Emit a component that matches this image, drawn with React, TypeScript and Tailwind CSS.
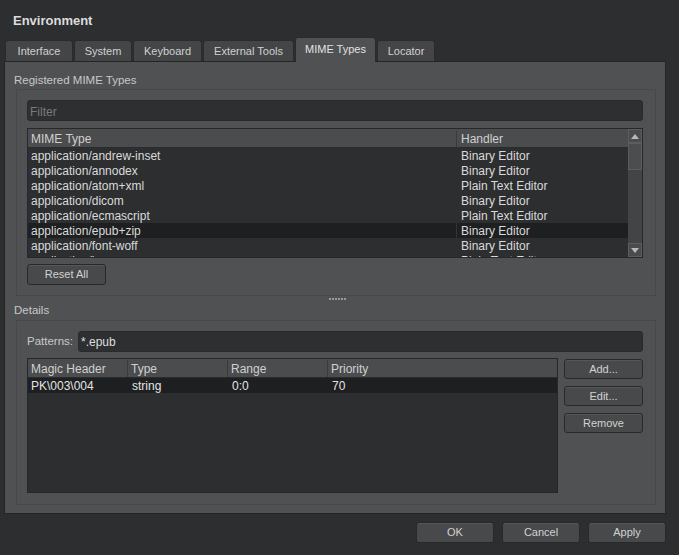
import React from 'react';

const tabs = [
  { label: 'Interface', w: 'w-[68px]' },
  { label: 'System', w: 'w-[58px]' },
  { label: 'Keyboard', w: 'w-[69px]' },
  { label: 'External Tools', w: 'w-[91px]' },
  { label: 'MIME Types', w: 'w-[81px]', active: true },
  { label: 'Locator', w: 'w-[58px]' },
];

const mimeRows = [
  ['application/andrew-inset', 'Binary Editor'],
  ['application/annodex', 'Binary Editor'],
  ['application/atom+xml', 'Plain Text Editor'],
  ['application/dicom', 'Binary Editor'],
  ['application/ecmascript', 'Plain Text Editor'],
  ['application/epub+zip', 'Binary Editor'],
  ['application/font-woff', 'Binary Editor'],
  ['application/json', 'Plain Text Editor'],
];

function Btn({ label, className = '' }: { label: string; className?: string }) {
  return (
    <button
      className={`h-[20px] rounded-[3px] border border-[#28292b] bg-[#48494b] text-[11px] leading-none text-[#d2d2d2] shadow-[inset_0_1px_0_#56575a] ${className}`}
    >
      {label}
    </button>
  );
}

function Arrow({ up }: { up?: boolean }) {
  return (
    <div className="h-[14px] border border-[#5c5d60] bg-[#4a4b4d] flex items-center justify-center">
      <svg width="8" height="5" viewBox="0 0 8 5">
        <polygon points={up ? '0,5 8,5 4,0' : '0,0 8,0 4,5'} fill="#b8b8b8" />
      </svg>
    </div>
  );
}

export default function App() {
  return (
    <div
      className="w-[679px] h-[555px] bg-[#2d2e30] overflow-hidden text-[#d4d4d4]"
      style={{ fontFamily: '"Liberation Sans", Arial, sans-serif' }}
    >
      {/* title */}
      <div className="h-[37px] pl-[13px] pt-[13px] text-[13px] font-bold leading-[16px] text-[#dcdcdc]">
        Environment
      </div>

      {/* tabs */}
      <div className="h-[24px] pl-[5px] flex items-end gap-[1px] relative z-10">
        {tabs.map((t) =>
          t.active ? (
            <div
              key={t.label}
              className={`${t.w} h-[25px] -mb-px rounded-t-[3px] border border-b-0 border-[#2a2b2d] bg-[#505153] flex items-center justify-center pb-[2px] text-[11px] text-[#e2e2e2]`}
            >
              {t.label}
            </div>
          ) : (
            <div
              key={t.label}
              className={`${t.w} h-[21px] rounded-t-[3px] border border-b-0 border-[#2a2b2d] bg-[#444547] flex items-center justify-center text-[11px] text-[#d0d0d0]`}
            >
              {t.label}
            </div>
          )
        )}
      </div>

      {/* panel */}
      <div className="ml-[4px] w-[662px] h-[453px] border border-[#242527] bg-[#505153] pl-[11px]">
        <div className="pt-[10px] -ml-[2px] h-[25px] text-[11.5px] leading-[16px] text-[#c8c8c8]">
          Registered MIME Types
        </div>
        <div className="mt-[2px] w-[640px] h-[207px] border border-[#47484a] pl-[10px] pr-[12px] pt-[10px]">
          <div className="h-[21px] rounded-[3px] border border-[#292a2c] bg-[#2e2f31] pl-[2px] pt-[2px] flex items-center text-[12px] text-[#7a7a7a]">
            Filter
          </div>
          <div className="mt-[7px] h-[130px] border border-[#27282a] bg-[#2d2e30] flex overflow-hidden">
            <div className="flex-1 flex flex-col overflow-hidden">
              <div className="h-[19px] shrink-0 bg-[#4b4c4e] border-b border-[#2a2b2d] flex pt-[2px] text-[12px] text-[#d0d0d0]">
                <div className="w-[429px] border-r border-[#3a3b3d] pl-[3px] flex items-center">MIME Type</div>
                <div className="flex-1 pl-[4px] flex items-center">Handler</div>
              </div>
              {mimeRows.map(([type, handler], i) => (
                <div
                  key={type}
                  className={`h-[15px] shrink-0 flex text-[12px] leading-[15px] text-[#dadada] ${i === 5 ? 'bg-[#1e1f20]' : ''}`}
                >
                  <div className={`w-[429px] pl-[3px] pt-px ${i === 5 ? 'border-r border-[#333436]' : ''}`}>{type}</div>
                  <div className="flex-1 pl-[4px] pt-px">{handler}</div>
                </div>
              ))}
            </div>
            <div className="w-[14px] flex flex-col">
              <Arrow up />
              <div className="flex-1 bg-[#434446]">
                <div className="h-[27px] border border-[#5c5d60] bg-[#4c4d4f]" />
              </div>
              <Arrow />
            </div>
          </div>
          <Btn label="Reset All" className="mt-[6px] w-[79px] h-[21px]" />
        </div>

        {/* splitter */}
        <div className="w-[640px] h-[5px] flex items-center justify-center gap-[1px] pl-[2px]">
          {[0, 1, 2, 3, 4, 5].map((d) => (
            <div key={d} className="w-[2px] h-[2px] bg-[#9a9a9a]" />
          ))}
        </div>

        <div className="-ml-[2px] h-[16px] pt-px text-[11.5px] leading-[16px] text-[#c8c8c8]">Details</div>
        <div className="mt-[3px] w-[640px] h-[185px] border border-[#47484a] pl-[10px] pr-[12px] pt-[10px]">
          <div className="h-[21px] flex items-center">
            <div className="w-[51px] pt-px text-[11.5px] text-[#c8c8c8]">Patterns:</div>
            <div className="flex-1 h-[21px] rounded-[3px] border border-[#292a2c] bg-[#2e2f31] pl-[2px] pt-px flex items-center text-[12px] text-[#dedede]">
              *.epub
            </div>
          </div>
          <div className="mt-[6px] flex">
            <div className="w-[531px] h-[135px] border border-[#27282a] bg-[#2d2e30] flex flex-col">
              <div className="h-[19px] shrink-0 bg-[#4b4c4e] border-b border-[#2a2b2d] flex pt-px text-[12px] text-[#d0d0d0]">
                <div className="w-[100px] border-r border-[#3a3b3d] pl-[3px] flex items-center">Magic Header</div>
                <div className="w-[100px] border-r border-[#3a3b3d] pl-[3px] flex items-center">Type</div>
                <div className="w-[100px] border-r border-[#3a3b3d] pl-[3px] flex items-center">Range</div>
                <div className="flex-1 pl-[3px] flex items-center">Priority</div>
              </div>
              <div className="h-[15px] bg-[#1e1f20] flex text-[12px] leading-[15px] text-[#e4e4e4]">
                <div className="w-[100px] pl-[3px] pt-px">PK\003\004</div>
                <div className="w-[100px] pl-[4px] pt-px">string</div>
                <div className="w-[100px] pl-[4px] pt-px">0:0</div>
                <div className="flex-1 pl-[4px] pt-px">70</div>
              </div>
            </div>
            <div className="ml-[6px] mt-[1px] w-[79px] flex flex-col gap-[7px]">
              <Btn label="Add..." className="w-full" />
              <Btn label="Edit..." className="w-full" />
              <Btn label="Remove" className="w-full" />
            </div>
          </div>
        </div>
      </div>

      {/* dialog buttons */}
      <div className="mt-[8px] pr-[13px] flex justify-end gap-[8px]">
        <Btn label="OK" className="w-[78px] h-[21px]" />
        <Btn label="Cancel" className="w-[78px] h-[21px]" />
        <Btn label="Apply" className="w-[78px] h-[21px]" />
      </div>
    </div>
  );
}
